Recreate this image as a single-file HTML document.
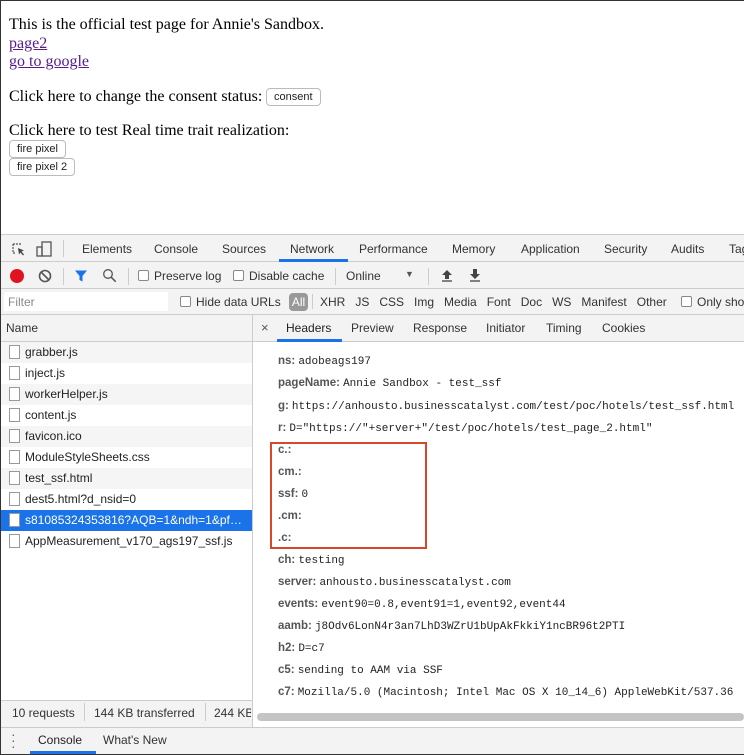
<!DOCTYPE html>
<html><head><style>
*{margin:0;padding:0;box-sizing:border-box}
body{width:744px;height:755px;overflow:hidden;position:relative;background:#fff;font-family:"Liberation Sans",sans-serif;}
#frame{position:absolute;left:0;top:0;width:744px;height:755px;border:1px solid #333;border-right:none;pointer-events:none;z-index:10}
.a{position:absolute;white-space:nowrap}
.pg{font-family:"Liberation Serif",serif;font-size:16px;color:#000}
.lk{color:#551a8b;text-decoration:underline}
.btn{position:absolute;border:1px solid #bbb;border-radius:4px;background:#fff;font-size:11px;color:#222;padding:0 7px;height:18px;line-height:16px}
.dt{font-size:12px;color:#333}
.bar{position:absolute;left:1px;width:743px;background:#f3f3f3;border-bottom:1px solid #ccc}
.row{position:absolute;left:1px;width:251px;height:21px;font-size:12px;color:#222;line-height:21px;padding-left:24px}
.row i{position:absolute;left:8px;top:3px;width:11px;height:14px;border:1px solid #999;background:#fff}
.row.g{background:#f5f5f5}
.row.sel{background:#1a73e8;color:#fff}
.kv{position:absolute;left:278px;font-size:11px;color:#333;white-space:nowrap;line-height:14px}
.kv b{font-family:"Liberation Sans",sans-serif;font-weight:bold;color:#555;font-size:11.5px}
.kv span{font-family:"Liberation Mono",monospace;color:#222}
.cb{display:inline-block;width:11px;height:11px;border:1px solid #888;border-radius:2px;background:#fff;vertical-align:-1px;margin-right:5px}
</style></head><body>
<div id="frame"></div>
<div class="a pg" style="left:9px;top:16px">This is the official test page for Annie's Sandbox.</div>
<div class="a pg lk" style="left:9px;top:35px">page2</div>
<div class="a pg lk" style="left:9px;top:53px">go to google</div>
<div class="a pg" style="left:9px;top:88px">Click here to change the consent status:</div>
<div class="btn" style="left:266px;top:88px">consent</div>
<div class="a pg" style="left:9px;top:122px">Click here to test Real time trait realization:</div>
<div class="btn" style="left:9px;top:140px">fire pixel</div>
<div class="btn" style="left:9px;top:158px">fire pixel 2</div>

<div style="position:absolute;left:0;top:234px;width:744px;height:521px;background:#fff;border-top:1px solid #ccc"></div>
<div class="bar" style="top:235px;height:27px"></div>
<svg class="a" style="left:10px;top:241px" width="16" height="16" viewBox="0 0 16 16"><path d="M3 3h9M3 3v9h3" stroke="#555" fill="none" stroke-width="1.2" stroke-dasharray="2 1"/><path d="M8 7l6 2.5-2.5 1 2.5 3-1 1-2.5-3-1.5 2z" fill="#444"/></svg>
<svg class="a" style="left:35px;top:240px" width="18" height="18" viewBox="0 0 18 18"><rect x="7" y="2" width="9" height="14" fill="none" stroke="#555" stroke-width="1.3"/><rect x="2" y="7" width="5" height="9" fill="none" stroke="#555" stroke-width="1.3"/></svg>
<div class="a" style="left:63px;top:240px;width:1px;height:17px;background:#ccc"></div>
<div class="a dt" style="left:82px;top:242px">Elements</div>
<div class="a dt" style="left:154px;top:242px">Console</div>
<div class="a dt" style="left:222px;top:242px">Sources</div>
<div class="a dt" style="left:290px;top:242px">Network</div>
<div class="a" style="left:279px;top:259px;width:69px;height:3px;background:#1a73e8"></div>
<div class="a dt" style="left:359px;top:242px">Performance</div>
<div class="a dt" style="left:452px;top:242px">Memory</div>
<div class="a dt" style="left:521px;top:242px">Application</div>
<div class="a dt" style="left:604px;top:242px">Security</div>
<div class="a dt" style="left:671px;top:242px">Audits</div>
<div class="a dt" style="left:729px;top:242px">Tag</div>

<div class="bar" style="top:262px;height:27px"></div>
<div class="a" style="left:10px;top:269px;width:14px;height:14px;border-radius:50%;background:#e0141e"></div>
<svg class="a" style="left:38px;top:269px" width="14" height="14" viewBox="0 0 14 14"><circle cx="7" cy="7" r="5.5" fill="none" stroke="#555" stroke-width="1.6"/><path d="M3 3l8 8" stroke="#555" stroke-width="1.6"/></svg>
<div class="a" style="left:63px;top:268px;width:1px;height:17px;background:#ccc"></div>
<svg class="a" style="left:74px;top:269px" width="14" height="14" viewBox="0 0 14 14"><path d="M1 1.5h12L8.5 7v5.5L5.5 11V7z" fill="#1a73e8"/></svg>
<svg class="a" style="left:102px;top:268px" width="15" height="15" viewBox="0 0 15 15"><circle cx="6" cy="6" r="4.3" fill="none" stroke="#555" stroke-width="1.3"/><path d="M9.2 9.2l4.5 4.5" stroke="#555" stroke-width="1.5"/></svg>
<div class="a" style="left:128px;top:268px;width:1px;height:17px;background:#ccc"></div>
<div class="a dt" style="left:138px;top:269px"><span class="cb"></span>Preserve log</div>
<div class="a dt" style="left:233px;top:269px"><span class="cb"></span>Disable cache</div>
<div class="a" style="left:335px;top:268px;width:1px;height:17px;background:#ccc"></div>
<div class="a dt" style="left:346px;top:269px">Online</div>
<div class="a" style="left:405px;top:269px;font-size:9px;color:#555">▼</div>
<div class="a" style="left:428px;top:268px;width:1px;height:17px;background:#ccc"></div>
<svg class="a" style="left:440px;top:268px" width="14" height="14" viewBox="0 0 14 14"><path d="M7 2l5 5H9v4H5V7H2z" fill="#444"/><path d="M2 13h10" stroke="#444" stroke-width="1.3"/></svg>
<svg class="a" style="left:468px;top:268px" width="14" height="14" viewBox="0 0 14 14"><path d="M7 11l5-5H9V1H5v5H2z" fill="#444"/><path d="M2 13h10" stroke="#444" stroke-width="1.3"/></svg>

<div class="bar" style="top:289px;height:26px"></div>
<div class="a" style="left:4px;top:292px;width:164px;height:19px;background:#fff"></div>
<div class="a" style="left:8px;top:295px;font-size:12px;color:#888">Filter</div>
<div class="a dt" style="left:180px;top:295px"><span class="cb"></span>Hide data URLs</div>
<div class="a" style="left:289px;top:293px;width:19px;height:18px;border-radius:4px;background:#999;color:#fff;font-size:12px;text-align:center;line-height:18px">All</div>
<div class="a" style="left:312px;top:294px;width:1px;height:15px;background:#ccc"></div>
<div class="a dt" style="left:320px;top:295px;word-spacing:0">XHR&nbsp;&nbsp; JS&nbsp;&nbsp; CSS&nbsp;&nbsp; Img&nbsp;&nbsp; Media&nbsp;&nbsp; Font&nbsp;&nbsp; Doc&nbsp;&nbsp; WS&nbsp;&nbsp; Manifest&nbsp;&nbsp; Other</div>
<div class="a dt" style="left:681px;top:295px"><span class="cb"></span>Only show</div>

<div class="a" style="left:1px;top:315px;width:251px;height:27px;background:#f3f3f3;border-bottom:1px solid #ccc"></div>
<div class="a dt" style="left:6px;top:321px">Name</div>
<div class="a" style="left:252px;top:315px;width:1px;height:412px;background:#ccc"></div>
<div class="a" style="left:253px;top:315px;width:491px;height:27px;background:#f3f3f3;border-bottom:1px solid #ccc"></div>
<div class="a" style="left:261px;top:320px;font-size:13px;color:#555">×</div>
<div class="a dt" style="left:286px;top:321px;color:#222">Headers</div>
<div class="a" style="left:277px;top:339px;width:65px;height:3px;background:#1a73e8"></div>
<div class="a dt" style="left:351px;top:321px">Preview</div>
<div class="a dt" style="left:413px;top:321px">Response</div>
<div class="a dt" style="left:486px;top:321px">Initiator</div>
<div class="a dt" style="left:546px;top:321px">Timing</div>
<div class="a dt" style="left:602px;top:321px">Cookies</div>

<div class="row g" style="top:342px"><i></i>grabber.js</div>
<div class="row" style="top:363px"><i></i>inject.js</div>
<div class="row g" style="top:384px"><i></i>workerHelper.js</div>
<div class="row" style="top:405px"><i></i>content.js</div>
<div class="row g" style="top:426px"><i></i>favicon.ico</div>
<div class="row" style="top:447px"><i></i>ModuleStyleSheets.css</div>
<div class="row g" style="top:468px"><i></i>test_ssf.html</div>
<div class="row" style="top:489px"><i></i>dest5.html?d_nsid=0</div>
<div class="row sel" style="top:510px"><i></i>s81085324353816?AQB=1&amp;ndh=1&amp;pf…</div>
<div class="row" style="top:531px"><i></i>AppMeasurement_v170_ags197_ssf.js</div>

<div class="kv" style="top:354px"><b>ns:</b> <span>adobeags197</span></div>
<div class="kv" style="top:376px"><b>pageName:</b> <span>Annie Sandbox - test_ssf</span></div>
<div class="kv" style="top:399px"><b>g:</b> <span>https://anhousto.businesscatalyst.com/test/poc/hotels/test_ssf.html</span></div>
<div class="kv" style="top:421px"><b>r:</b> <span>D="https://"+server+"/test/poc/hotels/test_page_2.html"</span></div>
<div class="kv" style="top:443px"><b>c.:</b></div>
<div class="kv" style="top:465px"><b>cm.:</b></div>
<div class="kv" style="top:487px"><b>ssf:</b> <span>0</span></div>
<div class="kv" style="top:509px"><b>.cm:</b></div>
<div class="kv" style="top:531px"><b>.c:</b></div>
<div class="a" style="left:270px;top:442px;width:157px;height:107px;border:2px solid #d9472b"></div>
<div class="kv" style="top:553px"><b>ch:</b> <span>testing</span></div>
<div class="kv" style="top:575px"><b>server:</b> <span>anhousto.businesscatalyst.com</span></div>
<div class="kv" style="top:597px"><b>events:</b> <span>event90=0.8,event91=1,event92,event44</span></div>
<div class="kv" style="top:619px"><b>aamb:</b> <span>j8Odv6LonN4r3an7LhD3WZrU1bUpAkFkkiY1ncBR96t2PTI</span></div>
<div class="kv" style="top:641px"><b>h2:</b> <span>D=c7</span></div>
<div class="kv" style="top:663px"><b>c5:</b> <span>sending to AAM via SSF</span></div>
<div class="kv" style="top:685px"><b>c7:</b> <span>Mozilla/5.0 (Macintosh; Intel Mac OS X 10_14_6) AppleWebKit/537.36</span></div>
<div class="a" style="left:257px;top:713px;width:487px;height:8px;border-radius:4px;background:#c4c4c4"></div>

<div class="a" style="left:1px;top:700px;width:251px;height:27px;background:#f3f3f3;border-top:1px solid #ccc"></div>
<div class="a dt" style="left:12px;top:706px">10 requests</div>
<div class="a" style="left:84px;top:703px;width:1px;height:18px;background:#ccc"></div>
<div class="a dt" style="left:94px;top:706px">144 KB transferred</div>
<div class="a" style="left:205px;top:703px;width:1px;height:18px;background:#ccc"></div>
<div class="a dt" style="left:214px;top:706px;width:37px;overflow:hidden">244 KB</div>

<div class="bar" style="top:727px;height:27px;border-top:1px solid #ccc;border-bottom:none"></div>
<div class="a" style="left:11px;top:731px;font-size:14px;color:#666;line-height:6px">·<br>·<br>·</div>
<div class="a dt" style="left:38px;top:733px;color:#222">Console</div>
<div class="a" style="left:30px;top:751px;width:66px;height:3px;background:#1a73e8"></div>
<div class="a dt" style="left:103px;top:733px">What's New</div>
</body></html>
